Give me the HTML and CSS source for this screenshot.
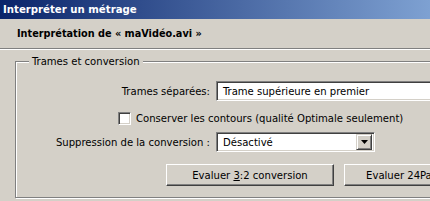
FILE: index.html
```html
<!DOCTYPE html>
<html lang="fr">
<head>
<meta charset="utf-8">
<title>Interpréter un métrage</title>
<link rel="stylesheet" href="styles.css">
</head>
<body>
<div class="window">
  <div class="titlebar"><span class="title">Interpréter un métrage</span></div>
  <div class="header"><span class="header-text">Interprétation de « maVidéo.avi »</span></div>
  <div class="content">
    <div class="group">
      <div class="group-title">Trames et conversion</div>
      <div class="form-row row-first">
        <span class="lbl">Trames séparées:</span>
        <div class="field field-wide"><span class="field-text">Trame supérieure en premier</span></div>
      </div>
      <div class="check-row">
        <span class="checkbox"></span>
        <span class="check-label">Conserver les contours (qualité Optimale seulement)</span>
      </div>
      <div class="form-row row-select">
        <span class="lbl">Suppression de la conversion :</span>
        <div class="field field-select">
          <span class="field-text">Désactivé</span>
          <span class="drop-btn"><svg width="7" height="4" viewBox="0 0 7 4"><path d="M0 0h7L3.5 4z" fill="#000"/></svg></span>
        </div>
      </div>
      <div class="button-row">
        <button class="btn">Evaluer <u>3</u>:2 conversion</button>
        <button class="btn">Evaluer 24Pa conversion</button>
      </div>
    </div>
  </div>
</div>
</body>
</html>
```
FILE: styles.css
```css
html, body {
  margin: 0;
  padding: 0;
  background: #d4d0c8;
  overflow: hidden;
}
body {
  width: 430px;
  height: 201px;
  font-family: "DejaVu Sans Condensed", "DejaVu Sans", sans-serif;
  font-stretch: condensed;
  font-size: 11.2px;
  color: #000;
}
.window {
  width: 430px;
  height: 201px;
  overflow: hidden;
}
.titlebar {
  height: 19px;
  display: flex;
  align-items: center;
  padding-left: 3px;
  background: linear-gradient(to right, #0a246a, #7ea1d2);
}
.title {
  color: #fff;
  font-weight: bold;
  font-size: 11.3px;
  line-height: 19px;
}
.header {
  height: 29px;
  display: flex;
  align-items: center;
  padding-left: 17px;
  border-bottom: 1px solid #808080;
  box-shadow: 0 1px 0 #fff;
}
.header-text {
  font-weight: bold;
  font-size: 10.8px;
}
.content {
  padding-top: 12px;
  padding-left: 15px;
}
.group {
  width: 440px;
  border: 1px solid #808080;
  box-shadow: inset 1px 1px 0 #fff, 1px 1px 0 #fff;
  padding-bottom: 11px;
}
.group-title {
  display: inline-block;
  margin-top: -7px;
  margin-left: 13px;
  padding: 0 3px;
  line-height: 13px;
  background: #d4d0c8;
  vertical-align: top;
}
.form-row {
  display: grid;
  grid-template-columns: 194px auto;
  column-gap: 6px;
  align-items: center;
}
.row-first {
  margin-top: 6px;
}
.lbl {
  text-align: right;
  white-space: nowrap;
}
.field {
  box-sizing: border-box;
  height: 20px;
  background: #fff;
  border: 1px solid;
  border-color: #808080 #fff #fff #808080;
  box-shadow: inset 1px 1px 0 #404040, inset -1px -1px 0 #d4d0c8;
  display: flex;
  align-items: center;
  padding-left: 6px;
  white-space: nowrap;
}
.field-wide {
  width: 260px;
}
.field-select {
  width: 159px;
  padding-right: 2px;
  justify-content: space-between;
}
.drop-btn {
  box-sizing: border-box;
  width: 16px;
  height: 16px;
  background: #d4d0c8;
  border: 1px solid;
  border-color: #d4d0c8 #404040 #404040 #d4d0c8;
  box-shadow: inset 1px 1px 0 #fff, inset -1px -1px 0 #808080;
  display: flex;
  align-items: center;
  justify-content: center;
}
.check-row {
  display: flex;
  align-items: center;
  gap: 5px;
  margin-top: 11px;
  padding-left: 102px;
  height: 13px;
}
.checkbox {
  box-sizing: border-box;
  width: 13px;
  height: 13px;
  background: #fff;
  border: 1px solid;
  border-color: #808080 #fff #fff #808080;
  box-shadow: inset 1px 1px 0 #404040, inset -1px -1px 0 #d4d0c8;
  flex: none;
}
.check-label {
  white-space: nowrap;
}
.row-select {
  margin-top: 7px;
}
.button-row {
  display: flex;
  gap: 10px;
  margin-top: 12px;
  padding-left: 150px;
}
.btn {
  box-sizing: border-box;
  width: 168px;
  height: 22px;
  flex: none;
  margin: 0;
  padding: 0;
  font: inherit;
  color: #000;
  background: #d4d0c8;
  border: 1px solid;
  border-color: #fff #404040 #404040 #fff;
  box-shadow: inset -1px -1px 0 #808080;
  white-space: nowrap;
}
```
